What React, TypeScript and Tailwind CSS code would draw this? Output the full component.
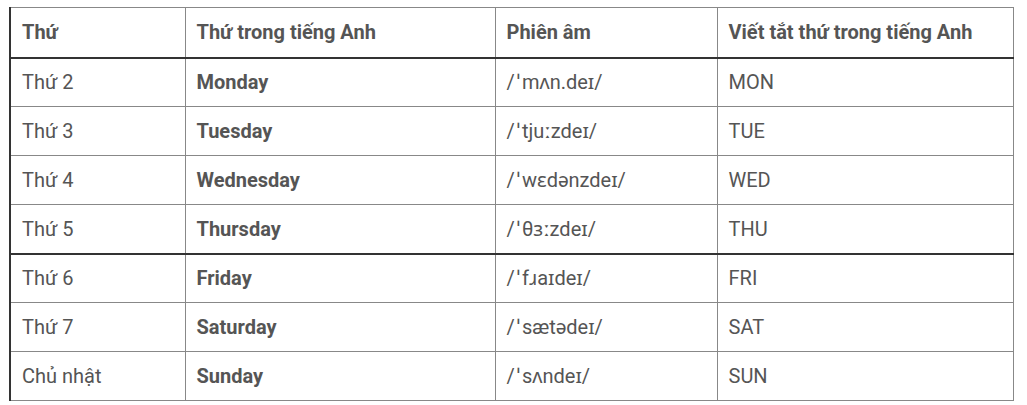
import React from "react";

const rows = [
  ["Thứ 2", "Monday", "mʌn.deɪ/", "MON"],
  ["Thứ 3", "Tuesday", "tjuːzdeɪ/", "TUE"],
  ["Thứ 4", "Wednesday", "wɛdənzdeɪ/", "WED"],
  ["Thứ 5", "Thursday", "θɜːzdeɪ/", "THU"],
  ["Thứ 6", "Friday", "fɹaɪdeɪ/", "FRI"],
  ["Thứ 7", "Saturday", "sætədeɪ/", "SAT"],
  ["Chủ nhật", "Sunday", "sʌndeɪ/", "SUN"],
];

export default function App() {
  return (
    <div className="w-[1027px] h-[405px] bg-white pt-[7px] pl-[9px]" style={{ fontFamily: "Roboto, 'Noto Sans', sans-serif" }}>
      <table className="border-collapse w-[1003px] text-[20px] text-[#555] table-fixed">
        <colgroup>
          <col className="w-[175px]" />
          <col className="w-[310px]" />
          <col className="w-[222px]" />
          <col className="w-[296px]" />
        </colgroup>
        <thead>
          <tr className="h-[50px]">
            {["Thứ", "Thứ trong tiếng Anh", "Phiên âm", "Viết tắt thứ trong tiếng Anh"].map((h, i) => (
              <th
                key={i}
                className={`text-left font-bold pl-[11px] pr-2 border-t border-r border-[#888] border-b-2 border-b-[#333] ${i === 0 ? "border-l-2 border-l-[#333]" : "border-l"}`}
              >
                {h}
              </th>
            ))}
          </tr>
        </thead>
        <tbody>
          {rows.map((r, ri) => (
            <tr key={ri} className="h-[49px]">
              {r.map((c, ci) => (
                <td
                  key={ci}
                  className={`pl-[11px] pr-2 border-r border-[#888] ${ri === 3 ? "border-b-2 border-b-[#333]" : "border-b"} ${ci === 0 ? "border-l-2 border-l-[#333]" : "border-l"} ${ci === 1 ? "font-bold" : "font-normal"}`}
                >
                  {ci === 2 ? (
                    <>
                      /<span className="inline-block px-[2px]">ˈ</span>
                      {c}
                    </>
                  ) : (
                    c
                  )}
                </td>
              ))}
            </tr>
          ))}
        </tbody>
      </table>
    </div>
  );
}
